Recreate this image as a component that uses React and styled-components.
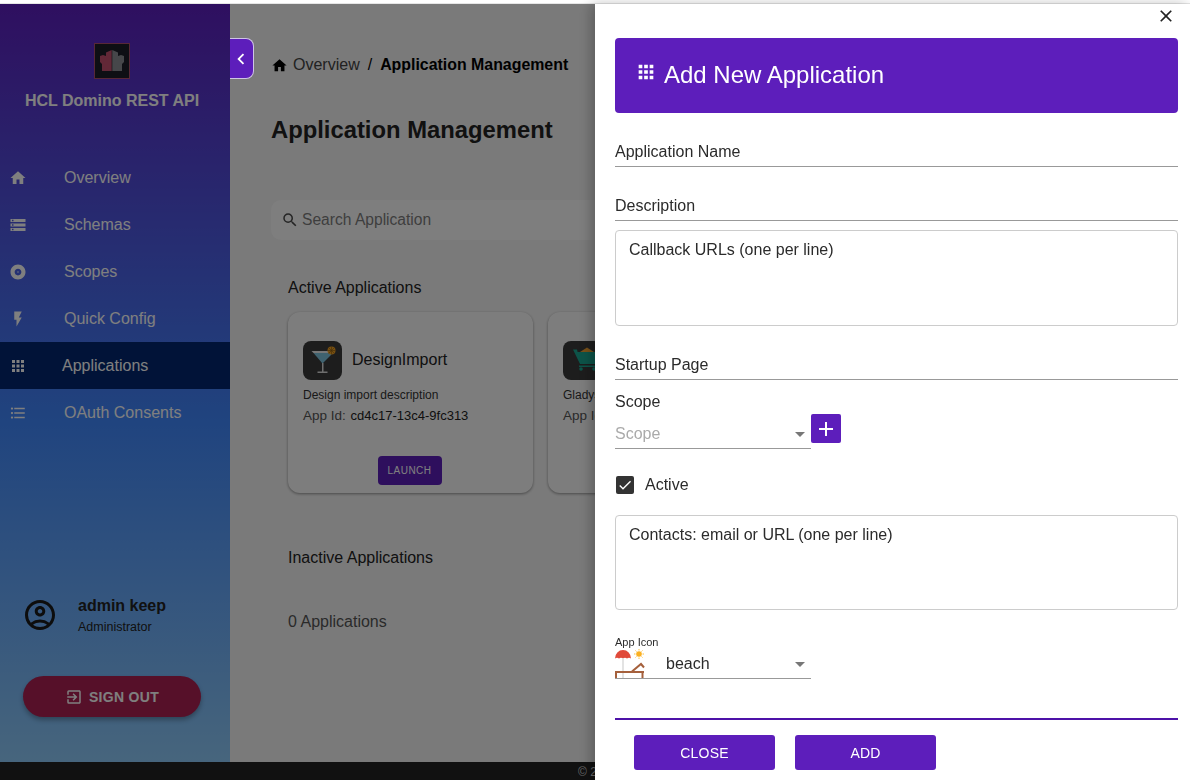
// App.jsx
import React from 'react';
import styled, { createGlobalStyle } from 'styled-components';
import {
  MdHome,
  MdStorage,
  MdAlbum,
  MdFlashOn,
  MdApps,
  MdFormatListBulleted,
  MdOutlineAccountCircle,
  MdExitToApp,
  MdChevronLeft,
  MdClose,
  MdAdd,
  MdArrowDropDown,
  MdCheck,
  MdSearch,
} from 'react-icons/md';

const GlobalStyle = createGlobalStyle`
  html, body {
    margin: 0;
    padding: 0;
    height: 100%;
    overflow: hidden;
    background: #fff;
    font-family: "Liberation Sans", Arial, sans-serif;
  }
  * { box-sizing: border-box; }
`;

const purple = '#5d1ebb';

const Page = styled.div`
  width: 1190px;
  height: 780px;
  display: flex;
  flex-direction: column;
  overflow: hidden;
`;

const TopStrip = styled.div`
  height: 4px;
  flex: none;
  background: #fff;
  border-bottom: 1px solid #e6e6e6;
  border-top: 2px solid #fff;
`;

const Body = styled.div`
  flex: 1;
  min-height: 0;
  display: flex;
`;

const Sidebar = styled.aside`
  width: 230px;
  flex: none;
  display: flex;
  flex-direction: column;
  background: linear-gradient(180deg, #5e1fc0 0%, #4088fe 55%, #8ecbfa 100%);
  color: #fff;
`;

const Brand = styled.div`
  display: flex;
  flex-direction: column;
  align-items: center;
  padding: 39px 6px 0 0;
  height: 149px;
`;

const LogoBox = styled.div`
  width: 36px;
  height: 36px;
  background: #1c1f28;
  border: 1px solid #b0506e;
  display: flex;
  align-items: center;
  justify-content: center;
`;

const BrandName = styled.div`
  margin-top: 13px;
  font-size: 16px;
  line-height: 17px;
  font-weight: 700;
  color: #fff;
  white-space: nowrap;
`;

const Nav = styled.nav`
  display: flex;
  flex-direction: column;
  margin-top: 1px;
`;

const NavRow = styled.div`
  height: 47px;
  display: flex;
  align-items: center;
  padding-left: 10px;
  font-size: 16px;
  color: #fff;
  background: ${(p) => (p.$active ? '#022670' : 'transparent')};

  svg {
    width: 18px;
    height: 18px;
    flex: none;
    margin-left: -1px;
  }

  span {
    margin-left: ${(p) => (p.$active ? 35 : 37)}px;
  }
`;

const SideBottom = styled.div`
  margin-top: auto;
  padding: 0 0 45px 23px;
`;

const UserRow = styled.div`
  display: flex;
  align-items: center;
  margin-bottom: 40px;

  svg {
    width: 36px;
    height: 36px;
    color: #1a1a1a;
    flex: none;
    margin-left: -1px;
  }
`;

const UserText = styled.div`
  margin-left: 20px;
  padding-top: 2px;
`;

const UserName = styled.div`
  font-size: 16px;
  line-height: 20px;
  font-weight: 700;
  color: #222;
`;

const UserRole = styled.div`
  font-size: 12.5px;
  line-height: 18px;
  margin-top: 2px;
  color: #222;
`;

const SignOut = styled.button`
  width: 178px;
  height: 41px;
  border: 0;
  border-radius: 21px;
  background: #ad2052;
  color: #fff;
  font: 700 14px "Liberation Sans", Arial, sans-serif;
  letter-spacing: 0.3px;
  display: flex;
  align-items: center;
  justify-content: center;
  gap: 6px;
  box-shadow: 0 3px 5px rgba(0, 0, 0, 0.3);

  svg {
    width: 18px;
    height: 18px;
  }
`;

const Main = styled.main`
  flex: 1;
  min-width: 0;
  background: #f5f5f5;
  padding: 48px 0 0 41px;
  overflow: hidden;
  color: #222;
`;

const Crumbs = styled.div`
  display: flex;
  align-items: center;
  height: 26px;
  font-size: 16px;
  white-space: nowrap;
  color: #000;

  svg {
    width: 17px;
    height: 17px;
    margin-right: 5px;
  }
`;

const CrumbLink = styled.span`
  color: #444;
`;

const CrumbSep = styled.span`
  margin: 0 8px;
`;

const CrumbNow = styled.span`
  font-size: 15.9px;
  font-weight: 700;
`;

const Title = styled.h1`
  margin: 38px 0 0;
  font-size: 23.8px;
  line-height: 28px;
  font-weight: 700;
  white-space: nowrap;
`;

const Search = styled.div`
  margin-top: 56px;
  width: 520px;
  height: 40px;
  border-radius: 10px;
  background: #fff;
  opacity: 0.75;
  display: flex;
  align-items: center;
  padding-left: 10px;
  font-size: 15.6px;
  color: #555;

  svg {
    width: 18px;
    height: 18px;
    color: #111;
    margin-right: 3px;
  }
`;

const Section = styled.div`
  margin: ${(p) => p.$top}px 0 0 17px;
  font-size: 16px;
  line-height: 20px;
  white-space: nowrap;
  color: ${(p) => p.$color || '#222'};
`;

const CardRow = styled.div`
  display: flex;
  gap: 15px;
  margin: 14px 0 0 17px;
  width: 600px;
`;

const Card = styled.div`
  width: 245px;
  height: 181px;
  flex: none;
  border-radius: 12px;
  background: #fbfbfb;
  box-shadow: 0 1px 3px rgba(0, 0, 0, 0.4);
  padding: 29px 15px 0;
  display: flex;
  flex-direction: column;
`;

const CardHead = styled.div`
  display: flex;
  align-items: center;
  gap: 10px;
`;

const CardName = styled.span`
  font-size: 16px;
  color: #222;
  margin-top: -2px;
`;

const AppBadge = styled.div`
  width: 39px;
  height: 39px;
  border-radius: 8px;
  background: #3a3a3a;
  display: flex;
  align-items: center;
  justify-content: center;
  flex: none;
`;

const CardDesc = styled.div`
  margin-top: 8px;
  font-size: 12px;
  line-height: 15px;
  color: #333;
  white-space: nowrap;
`;

const CardId = styled.div`
  margin-top: 5px;
  font-size: 13.5px;
  line-height: 15px;
  color: #555;
  white-space: nowrap;

  b {
    font-weight: 400;
    font-size: 13px;
    color: #222;
    margin-left: 1px;
  }
`;

const Launch = styled.button`
  align-self: center;
  margin: 33px 2px 0 0;
  width: 64px;
  height: 29px;
  border: 0;
  border-radius: 4px;
  background: ${purple};
  color: #fff;
  font: 400 10px "Liberation Sans", Arial, sans-serif;
  letter-spacing: 0.5px;
`;

const Footer = styled.footer`
  height: 18px;
  flex: none;
  background: #222;
  color: #ccc;
  font-size: 12px;
  line-height: 20px;
  padding-left: 578px;
  white-space: nowrap;
`;

const Scrim = styled.div`
  position: fixed;
  inset: 4px 0 0 0;
  background: rgba(0, 0, 0, 0.5);
`;

const Toggle = styled.button`
  position: fixed;
  left: 230px;
  top: 38px;
  width: 24px;
  height: 41px;
  padding: 0;
  background: ${purple};
  border: 1px solid #cfc4e6;
  border-left: 0;
  border-radius: 0 8px 8px 0;
  color: #fff;
  display: flex;
  align-items: center;
  justify-content: center;

  svg {
    width: 22px;
    height: 22px;
    margin-left: -2px;
  }
`;

const Drawer = styled.section`
  position: fixed;
  top: 4px;
  right: 0;
  bottom: 0;
  width: 595px;
  background: #fff;
  box-shadow: -4px 0 12px rgba(0, 0, 0, 0.25);
  padding: 0 12px 0 20px;
  display: flex;
  flex-direction: column;
  color: #2b2b2b;
`;

const CloseIcon = styled.button`
  position: absolute;
  top: 2px;
  right: 14px;
  padding: 0;
  border: 0;
  background: none;
  display: flex;
  color: #222;

  svg {
    width: 20px;
    height: 20px;
  }
`;

const DrawerHead = styled.header`
  margin-top: 34px;
  height: 75px;
  flex: none;
  background: ${purple};
  border-radius: 4px;
  color: #fff;
  display: flex;
  align-items: center;
  padding: 0 0 2px 20px;
  font-size: 24px;

  svg {
    width: 22px;
    height: 22px;
    margin: -6px 7px 0 0;
    flex: none;
  }
`;

const Field = styled.div`
  margin-top: ${(p) => p.$top}px;
  height: 28px;
  flex: none;
  font-size: 16px;
  line-height: 26px;
  border-bottom: 1px solid #999;
`;

const TextBox = styled.div`
  margin-top: ${(p) => p.$top}px;
  height: ${(p) => p.$height}px;
  flex: none;
  border: 1px solid #ccc;
  border-radius: 4px;
  padding: 10px 13px;
  font-size: 16px;
  line-height: 18px;
`;

const ScopeLabel = styled.div`
  margin-top: 13px;
  font-size: 16px;
  line-height: 18px;
`;

const SelectRow = styled.div`
  display: flex;
  align-items: flex-end;
`;

const SelectBox = styled.div`
  width: 196px;
  height: ${(p) => p.$height}px;
  border-bottom: 1px solid #999;
  display: flex;
  align-items: center;
  justify-content: space-between;
  font-size: 16px;
  color: ${(p) => p.$color || '#2b2b2b'};
  padding-left: ${(p) => p.$padLeft || 0}px;
  padding-top: ${(p) => p.$padTop || 0}px;

  svg {
    width: 24px;
    height: 24px;
    color: #777;
    flex: none;
    margin-right: -1px;
  }
`;

const PlusButton = styled.button`
  width: 30px;
  height: 29px;
  margin-bottom: 6px;
  padding: 0;
  border: 0;
  border-radius: 2px;
  background: ${purple};
  color: #fff;
  display: flex;
  align-items: center;
  justify-content: center;

  svg {
    width: 24px;
    height: 24px;
  }
`;

const CheckRow = styled.label`
  margin-top: 27px;
  display: flex;
  align-items: center;
  height: 18px;
  font-size: 16px;
  padding-left: 1px;
`;

const CheckBox = styled.span`
  width: 18px;
  height: 18px;
  border-radius: 2px;
  background: #333;
  color: #fff;
  display: flex;
  align-items: center;
  justify-content: center;
  margin-right: 11px;

  svg {
    width: 16px;
    height: 16px;
  }
`;

const TinyLabel = styled.div`
  margin-top: 25px;
  font-size: 11px;
  line-height: 14px;
`;

const IconSelect = styled.div`
  position: relative;
  height: 30px;
  width: 196px;
`;

const BeachPic = styled.svg`
  position: absolute;
  left: 0;
  top: 0;
  width: 30px;
  height: 29px;
`;

const Divider = styled.div`
  margin-top: 39px;
  height: 2px;
  flex: none;
  background: #4d12a8;
`;

const Actions = styled.div`
  margin-top: 15px;
  padding-left: 19px;
  display: flex;
  gap: 20px;
`;

const ActionButton = styled.button`
  width: 141px;
  height: 35px;
  border: 0;
  border-radius: 3px;
  background: ${purple};
  color: #fff;
  font: 400 14px "Liberation Sans", Arial, sans-serif;
  letter-spacing: 0.2px;
`;

const Logo = () => (
  <svg width="26" height="22" viewBox="0 0 26 22">
    <path d="M12.7 0 L7 2.5 V6 L4 5 L1 6 V12 L3 14 V21 H12.7 Z" fill="#c4506e" />
    <path d="M13.3 0 L19 2.5 V6 L22 5 L25 6 V12 L23 14 V21 H13.3 Z" fill="#8c8f94" />
  </svg>
);

const Martini = () => (
  <svg width="32" height="32" viewBox="0 0 32 32">
    <path d="M4.5 6 H28 L26.5 8 H6.5 Z" fill="#eee" />
    <path d="M6.5 8 H26 L15.5 18.5 Z" fill="#7fc4df" />
    <rect x="15" y="18" width="1.5" height="9" fill="#ddd" />
    <rect x="10.5" y="26.5" width="10" height="1.5" fill="#ddd" />
    <circle cx="24.5" cy="5.5" r="4" fill="#f0a020" />
    <path d="M24.5 1.5 V9.5 M20.5 5.5 H28.5 M21.7 2.7 L27.3 8.3 M27.3 2.7 L21.7 8.3" stroke="#8a5a10" strokeWidth="0.6" />
  </svg>
);

const Cart = () => (
  <svg width="32" height="32" viewBox="0 0 32 32">
    <path d="M13 7 L20 2.5 L27 7 Z" fill="#f0a030" />
    <path d="M6 4.5 H10 L10.6 7 H32 L29 19 H13 Z" fill="#1aa892" />
    <rect x="12" y="20.5" width="17" height="1.5" fill="#1aa892" />
    <circle cx="14" cy="24" r="1.8" fill="#1aa892" />
    <circle cx="27" cy="24" r="1.8" fill="#1aa892" />
  </svg>
);

const navItems = [
  { label: 'Overview', icon: <MdHome /> },
  { label: 'Schemas', icon: <MdStorage /> },
  { label: 'Scopes', icon: <MdAlbum /> },
  { label: 'Quick Config', icon: <MdFlashOn /> },
  { label: 'Applications', icon: <MdApps />, active: true },
  { label: 'OAuth Consents', icon: <MdFormatListBulleted /> },
];

const App = () => {
  return (
    <Page>
      <GlobalStyle />
      <TopStrip />
      <Body>
        <Sidebar>
          <Brand>
            <LogoBox>
              <Logo />
            </LogoBox>
            <BrandName>HCL Domino REST API</BrandName>
          </Brand>
          <Nav>
            {navItems.map((item) => (
              <NavRow key={item.label} $active={item.active}>
                {item.icon}
                <span>{item.label}</span>
              </NavRow>
            ))}
          </Nav>
          <SideBottom>
            <UserRow>
              <MdOutlineAccountCircle />
              <UserText>
                <UserName>admin keep</UserName>
                <UserRole>Administrator</UserRole>
              </UserText>
            </UserRow>
            <SignOut>
              <MdExitToApp />
              SIGN OUT
            </SignOut>
          </SideBottom>
        </Sidebar>
        <Main>
          <Crumbs>
            <MdHome />
            <CrumbLink>Overview</CrumbLink>
            <CrumbSep>/</CrumbSep>
            <CrumbNow>Application Management</CrumbNow>
          </Crumbs>
          <Title>Application Management</Title>
          <Search>
            <MdSearch />
            Search Application
          </Search>
          <Section $top={38}>Active Applications</Section>
          <CardRow>
            <Card>
              <CardHead>
                <AppBadge>
                  <Martini />
                </AppBadge>
                <CardName>DesignImport</CardName>
              </CardHead>
              <CardDesc>Design import description</CardDesc>
              <CardId>
                App Id: <b>cd4c17-13c4-9fc313</b>
              </CardId>
              <Launch>LAUNCH</Launch>
            </Card>
            <Card>
              <CardHead>
                <AppBadge>
                  <Cart />
                </AppBadge>
              </CardHead>
              <CardDesc>Gladys</CardDesc>
              <CardId>App Id</CardId>
            </Card>
          </CardRow>
          <Section $top={55}>Inactive Applications</Section>
          <Section $top={44} $color="#555">0 Applications</Section>
        </Main>
      </Body>
      <Footer>© 2</Footer>
      <Scrim />
      <Toggle>
        <MdChevronLeft />
      </Toggle>
      <Drawer>
        <CloseIcon>
          <MdClose />
        </CloseIcon>
        <DrawerHead>
          <MdApps />
          Add New Application
        </DrawerHead>
        <Field $top={26}>Application Name</Field>
        <Field $top={26}>Description</Field>
        <TextBox $top={9} $height={96}>Callback URLs (one per line)</TextBox>
        <Field $top={26}>Startup Page</Field>
        <ScopeLabel>Scope</ScopeLabel>
        <SelectRow>
          <SelectBox $height={38} $padTop={8} $color="#aaa">
            Scope
            <MdArrowDropDown />
          </SelectBox>
          <PlusButton>
            <MdAdd />
          </PlusButton>
        </SelectRow>
        <CheckRow>
          <CheckBox>
            <MdCheck />
          </CheckBox>
          Active
        </CheckRow>
        <TextBox $top={21} $height={95}>Contacts: email or URL (one per line)</TextBox>
        <TinyLabel>App Icon</TinyLabel>
        <IconSelect>
          <SelectBox $height={30} $padLeft={51} $padTop={1}>
            beach
            <MdArrowDropDown />
          </SelectBox>
          <BeachPic viewBox="0 0 30 29">
            <path d="M0 9.5 A8 8.5 0 0 1 16 9.5 Q14 8 12 9.5 Q10 8 8 9.5 Q6 8 4 9.5 Q2 8 0 9.5 Z" fill="#e04a3a" />
            <rect x="7.2" y="9" width="1.6" height="20" fill="#ddd" />
            <circle cx="24" cy="5" r="2.8" fill="#fbb020" />
            <path d="M24 0 V1.5 M24 8.5 V10 M19 5 H20.5 M27.5 5 H29 M20.5 1.5 L21.5 2.5 M27.5 1.5 L26.5 2.5 M20.5 8.5 L21.5 7.5 M27.5 8.5 L26.5 7.5" stroke="#fbc040" strokeWidth="1" />
            <path d="M0 23 H29 M1 23 V29 M27.5 23 V29 M17 22.5 L26 15 L29 18.5" stroke="#a5603c" strokeWidth="2" fill="none" />
          </BeachPic>
        </IconSelect>
        <Divider />
        <Actions>
          <ActionButton>CLOSE</ActionButton>
          <ActionButton>ADD</ActionButton>
        </Actions>
      </Drawer>
    </Page>
  );
};

export default App;
